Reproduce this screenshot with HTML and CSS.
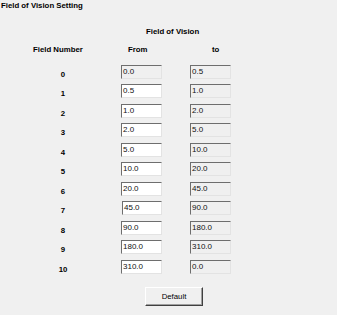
FILE: index.html
```html
<!DOCTYPE html>
<html>
<head>
<meta charset="utf-8">
<link rel="stylesheet" href="styles.css">
</head>
<body>
<div class="dialog">
  <div class="title">Field of Vision Setting</div>
  <div class="group-title">Field of Vision</div>
  <div class="table">
    <div class="hdr hdr-num">Field Number</div>
    <div class="hdr hdr-from">From</div>
    <div class="hdr hdr-to">to</div>

    <div class="num">0</div><div class="box ro from">0.0</div><div class="box ro to">0.5</div>
    <div class="num">1</div><div class="box from">0.5</div><div class="box ro to">1.0</div>
    <div class="num">2</div><div class="box from">1.0</div><div class="box ro to">2.0</div>
    <div class="num">3</div><div class="box from">2.0</div><div class="box ro to">5.0</div>
    <div class="num">4</div><div class="box from">5.0</div><div class="box ro to">10.0</div>
    <div class="num">5</div><div class="box from">10.0</div><div class="box ro to">20.0</div>
    <div class="num">6</div><div class="box from">20.0</div><div class="box ro to">45.0</div>
    <div class="num">7</div><div class="box from shifted">45.0</div><div class="box ro to">90.0</div>
    <div class="num">8</div><div class="box from">90.0</div><div class="box ro to">180.0</div>
    <div class="num">9</div><div class="box from">180.0</div><div class="box ro to">310.0</div>
    <div class="num">10</div><div class="box from">310.0</div><div class="box ro to">0.0</div>
  </div>
  <div class="actions">
    <button class="btn">Default</button>
  </div>
</div>
</body>
</html>
```
FILE: styles.css
```css
html, body {
  margin: 0;
  padding: 0;
  background: #f0f0f0;
}
body {
  width: 337px;
  height: 315px;
  overflow: hidden;
  font-family: "Liberation Sans", Arial, sans-serif;
  color: #000;
}
.dialog {
  padding: 1px 0 0 1px;
}
.title {
  font-size: 7.8px;
  font-weight: bold;
  line-height: 10px;
  height: 10px;
}
.group-title {
  margin-top: 16px;
  padding-left: 145px;
  font-size: 7.8px;
  font-weight: bold;
  line-height: 10px;
}
.table {
  margin-top: 8px;
  padding-left: 32px;
  display: grid;
  grid-template-columns: 88px 41px 28px 41px;
  grid-auto-rows: 14px;
  row-gap: 5.5px;
}
.hdr {
  font-size: 7.8px;
  font-weight: bold;
  line-height: 10px;
  margin-bottom: 9px;
  grid-row: 1;
}
.hdr-num { grid-column: 1; }
.hdr-from { grid-column: 2; padding-left: 7px; }
.hdr-to { grid-column: 4; padding-left: 22px; }
.num {
  grid-column: 1;
  width: 60px;
  text-align: center;
  font-size: 7.8px;
  font-weight: bold;
  line-height: 10px;
  padding-top: 5px;
}
.box {
  box-sizing: border-box;
  height: 14px;
  border-top: 1px solid #6e6e6e;
  border-left: 1px solid #6e6e6e;
  border-right: 1px solid #e3e3e3;
  border-bottom: 1px solid #e3e3e3;
  background: #fff;
  font-size: 8px;
  line-height: 11px;
  padding-left: 1px;
  white-space: nowrap;
  overflow: hidden;
  color: #111;
}
.box.ro {
  background: #f0f0f0;
}
.from { grid-column: 2; }
.to { grid-column: 4; }
.shifted { margin-left: 1px; }
.actions {
  padding-left: 144px;
  margin-top: 11px;
}
.btn {
  box-sizing: border-box;
  width: 58px;
  height: 19px;
  margin: 0;
  padding: 0;
  background: #f0f0f0;
  border-top: 1px solid #ffffff;
  border-left: 1px solid #ffffff;
  border-right: 1px solid #404040;
  border-bottom: 1px solid #404040;
  box-shadow: inset -1px -1px 0 #a0a0a0;
  font-family: "Liberation Sans", Arial, sans-serif;
  font-size: 7.8px;
  color: #000;
}
```
